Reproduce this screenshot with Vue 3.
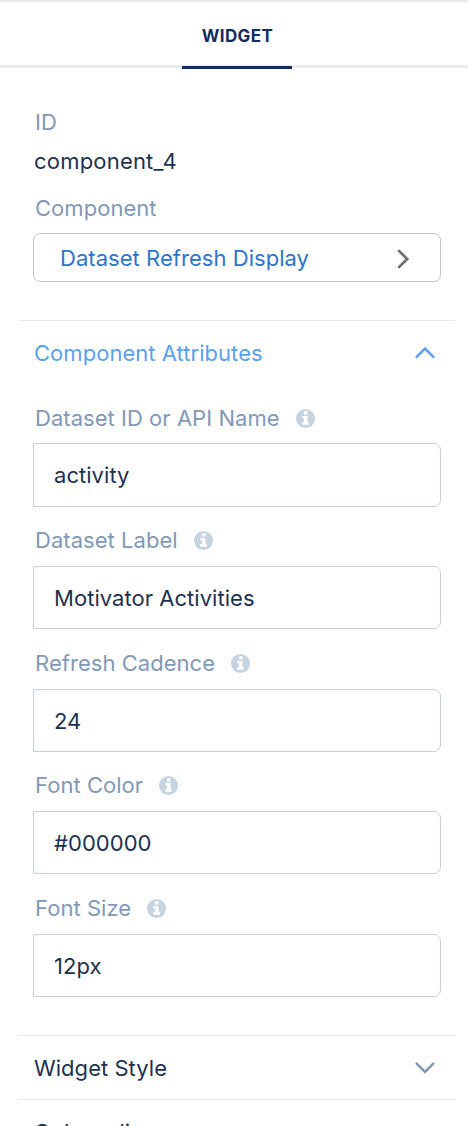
<script setup>
import { ref } from 'vue'

const fields = ref([
  { label: 'Dataset ID or API Name', value: 'activity' },
  { label: 'Dataset Label', value: 'Motivator Activities' },
  { label: 'Refresh Cadence', value: '24' },
  { label: 'Font Color', value: '#000000' },
  { label: 'Font Size', value: '12px' },
])
</script>

<template>
  <div class="panel">
    <header class="tabs">
      <div class="tab">WIDGET</div>
    </header>
    <section class="summary">
      <div class="label id-label">ID</div>
      <div class="id-value">component_4</div>
      <div class="label comp-label">Component</div>
      <button class="picker">
        <span>Dataset Refresh Display</span>
        <svg width="14" height="20" viewBox="0 0 14 20"><path d="M3 1.9 11.2 10 3 18.1" fill="none" stroke="#706e6b" stroke-width="2.7" stroke-linecap="round" /></svg>
      </button>
    </section>
    <section class="group">
      <div class="heading open">
        <span>Component Attributes</span>
        <svg width="20" height="12" viewBox="0 0 20 12"><path d="M1.7 9.9 10 1.6 18.3 9.9" fill="none" stroke="#5a9ff0" stroke-width="2.5" stroke-linecap="round" /></svg>
      </div>
      <div v-for="f in fields" :key="f.label" class="field">
        <div class="label field-label">
          <span>{{ f.label }}</span>
          <svg class="info" width="19" height="19" viewBox="0 0 19 19">
            <circle cx="9.5" cy="9.5" r="9.5" fill="#c6d3e1" />
            <path d="M7.9 2.2h3.6v3.2H7.9zM6.2 6.9h5.3v6.3h1.4v2.5H6.2v-2.5h1.7V9.3H6.2z" fill="#fff" />
          </svg>
        </div>
        <div class="input">{{ f.value }}</div>
      </div>
    </section>
    <section class="group closed">
      <div class="heading">
        <span>Widget Style</span>
        <svg width="20" height="12" viewBox="0 0 20 12"><path d="M1.7 1.7 10 10 18.3 1.7" fill="none" stroke="#8199b8" stroke-width="2.5" stroke-linecap="round" /></svg>
      </div>
    </section>
    <section class="group">
      <div class="heading"><span>Onboarding</span></div>
    </section>
  </div>
</template>

<style>
body { background: #fff; }
</style>

<style scoped>
.panel {
  box-sizing: border-box;
  height: 1126px;
  overflow: hidden;
  font-family: Inter, "Liberation Sans", sans-serif;
  font-size: 22px;
  line-height: 28px;
  letter-spacing: 0.04px;
  color: #1d3150;
}
.tabs {
  box-sizing: border-box;
  height: 68px;
  border-top: 2px solid #e8ecf0;
  border-bottom: 3px solid #e8ecf0;
}
.tab {
  box-sizing: border-box;
  width: 110px;
  height: 67px;
  margin-left: 182px;
  border-bottom: 3px solid #122d60;
  padding: 20px 0 0 1px;
  text-align: center;
  font-size: 17px;
  font-weight: 700;
  letter-spacing: 0.4px;
  color: #122d60;
}
.summary {
  box-sizing: border-box;
  height: 252px;
  padding: 40px 27px 0 33px;
}
.label {
  padding-left: 2px;
  color: #8199b8;
}
.id-value {
  margin: 11px 0 0;
  padding-left: 1px;
  letter-spacing: 0.2px;
}
.comp-label { margin-top: 19px; }
.picker {
  box-sizing: border-box;
  display: flex;
  align-items: center;
  justify-content: space-between;
  width: 408px;
  height: 49px;
  margin-top: 11px;
  padding: 0 30px 0 26px;
  border: 1px solid #c5c5c7;
  border-radius: 7px;
  background: #fff;
  font: inherit;
  letter-spacing: inherit;
  color: #2c75cf;
}
.picker svg { margin-top: 3px; }
.group {
  margin: 0 13px 0 19px;
  border-top: 1px solid #e6eaee;
}
.heading {
  box-sizing: border-box;
  display: flex;
  align-items: center;
  justify-content: space-between;
  height: 63px;
  padding: 2px 20px 0 15px;
}
.open {
  padding-top: 1px;
  color: #5a9ff0;
}
.field { margin: 0 14px; height: 122.6px; }
.field-label {
  box-sizing: border-box;
  display: flex;
  align-items: flex-start;
  gap: 16px;
  height: 59.4px;
  padding-top: 19.6px;
}
.info { margin-top: 5px; }
.input {
  box-sizing: border-box;
  height: 63.2px;
  border: 1px solid #c3d1df;
  border-radius: 0 7px 7px 0;
  padding: 17px 19px 0 20px;
}
.closed { margin-top: 38px; }
</style>
